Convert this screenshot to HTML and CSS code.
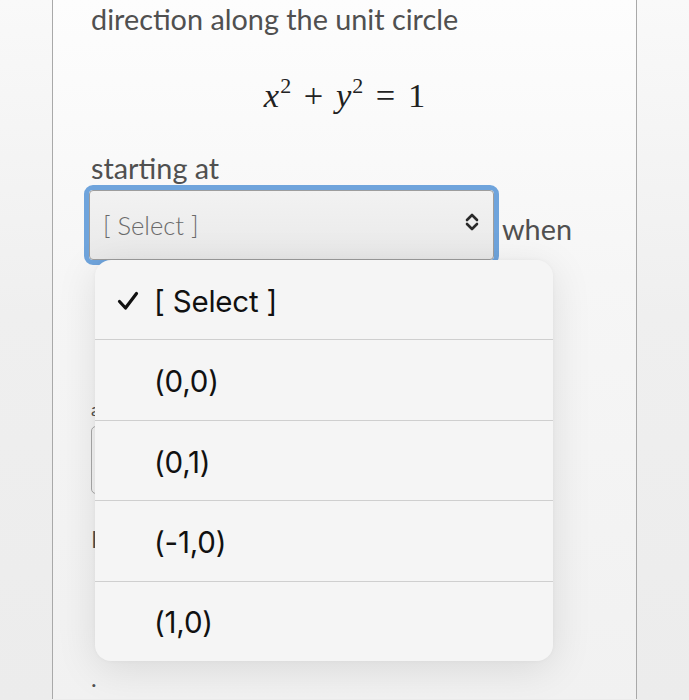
FILE: index.html
```html
<!DOCTYPE html>
<html>
<head>
<meta charset="utf-8">
<link rel="stylesheet" href="styles.css">
</head>
<body>
<div class="page">
  <div class="card">
    <p class="text first">direction along the unit circle</p>
    <div class="eq"><i>x</i><sup>2</sup> + <i>y</i><sup>2</sup> = 1</div>
    <p class="text label">starting at</p>
    <div class="row">
      <div class="select">
        <span class="sel-text">[ Select ]</span>
        <svg class="chev" width="16" height="20" viewBox="0 0 16 20"><path d="M3 8 L8 3 L13 8 M3 12 L8 17 L13 12" fill="none" stroke="#2a2a2a" stroke-width="2.6" stroke-linecap="round" stroke-linejoin="round"/></svg>
      </div>
      <span class="text when">when</span>
    </div>
    <p class="text small">and</p>
    <div class="input-box"></div>
    <p class="text lower">If</p>
    <p class="text dot">.</p>

    <div class="menu">
      <div class="opt">
        <svg class="check" width="22" height="20" viewBox="0 0 22 20"><path d="M2.5 10.5 L8.5 17 L19.5 2.5" fill="none" stroke="#111" stroke-width="3.2" stroke-linecap="round" stroke-linejoin="round"/></svg>
        <span>[ Select ]</span>
      </div>
      <div class="opt"><span>(0,0)</span></div>
      <div class="opt"><span>(0,1)</span></div>
      <div class="opt"><span>(-1,0)</span></div>
      <div class="opt"><span>(1,0)</span></div>
    </div>
  </div>
</div>
</body>
</html>
```

FILE: styles.css
```css
html, body {
  margin: 0;
  padding: 0;
}
body {
  width: 689px;
  height: 700px;
  overflow: hidden;
  background: linear-gradient(180deg, #f9f9f9 0%, #efefef 45%, #ececec 100%);
  font-family: Lato, "Open Sans", sans-serif;
}
.page {
  padding-left: 52px;
  width: 585px;
}
.card {
  position: relative;
  height: 700px;
  box-sizing: border-box;
  border-left: 1.5px solid #a9a9a9;
  border-right: 1.5px solid #a9a9a9;
  background: linear-gradient(180deg, #fdfdfd 0%, #f6f6f6 40%, #f1f1f1 100%);
  padding-left: 38px;
}
.text {
  margin: 0;
  color: #505050;
  font-size: 28.8px;
  font-weight: 400;
}
.first {
  line-height: 40px;
  margin-top: -1px;
}
.eq {
  font-family: "Liberation Serif", "Times New Roman", serif;
  font-size: 34.5px;
  color: #222;
  text-align: center;
  margin-top: 37px;
  margin-left: -38px;
  width: 583px;
  line-height: 38px;
  word-spacing: 4px;
}
.eq i {
  font-style: italic;
}
.eq sup {
  font-size: 22px;
  vertical-align: 14px;
  line-height: 0;
  margin-left: 1px;
}
.label {
  margin-top: 37px;
  line-height: 34px;
}
.row {
  display: flex;
  align-items: flex-end;
  margin-top: 5px;
}
.select {
  width: 405px;
  height: 70px;
  box-sizing: border-box;
  margin-left: -2px;
  border: 1px solid #9d9d9d;
  border-radius: 4px;
  outline: 5px solid #6fa4dc;
  outline-offset: 0;
  background: linear-gradient(180deg, #f2f2f2, #e9e9e9);
  display: flex;
  align-items: center;
  justify-content: space-between;
  padding: 0 13px 0 13px;
}
.sel-text {
  font-size: 25.5px;
  font-weight: 300;
  color: #6a6a6a;
  margin-top: 0;
}
.chev {
  margin-top: -6px;
}
.when {
  margin-left: 8px;
  margin-bottom: 14px;
  line-height: 34px;
}
.small {
  font-size: 18px;
  margin-top: 138px;
  line-height: 22px;
}
.input-box {
  width: 200px;
  height: 68px;
  margin-top: 6px;
  box-sizing: border-box;
  border: 1px solid #a8a8a8;
  border-radius: 5px;
}
.lower {
  margin-top: 30px;
  line-height: 30px;
  font-size: 24px;
}
.dot {
  margin-top: 114px;
  font-size: 24px;
  line-height: 20px;
}
.menu {
  position: absolute;
  left: 42px;
  top: 261px;
  width: 458px;
  height: 401px;
  border-radius: 16px;
  background: #f5f5f5;
  box-shadow: 0 8px 40px rgba(0, 0, 0, 0.10), 0 0 4px rgba(0, 0, 0, 0.04);
  overflow: hidden;
  display: flex;
  flex-direction: column;
}
.opt {
  flex: 1;
  display: flex;
  align-items: center;
  padding-left: 59px;
  position: relative;
  font-family: Inter, Roboto, sans-serif;
  font-size: 29.5px;
  color: #111;
  letter-spacing: -0.2px;
}
.opt + .opt {
  border-top: 1px solid #cfcfcf;
}
.opt span {
  margin-top: 2px;
}
.check {
  position: absolute;
  left: 22px;
  top: 31px;
}
```
